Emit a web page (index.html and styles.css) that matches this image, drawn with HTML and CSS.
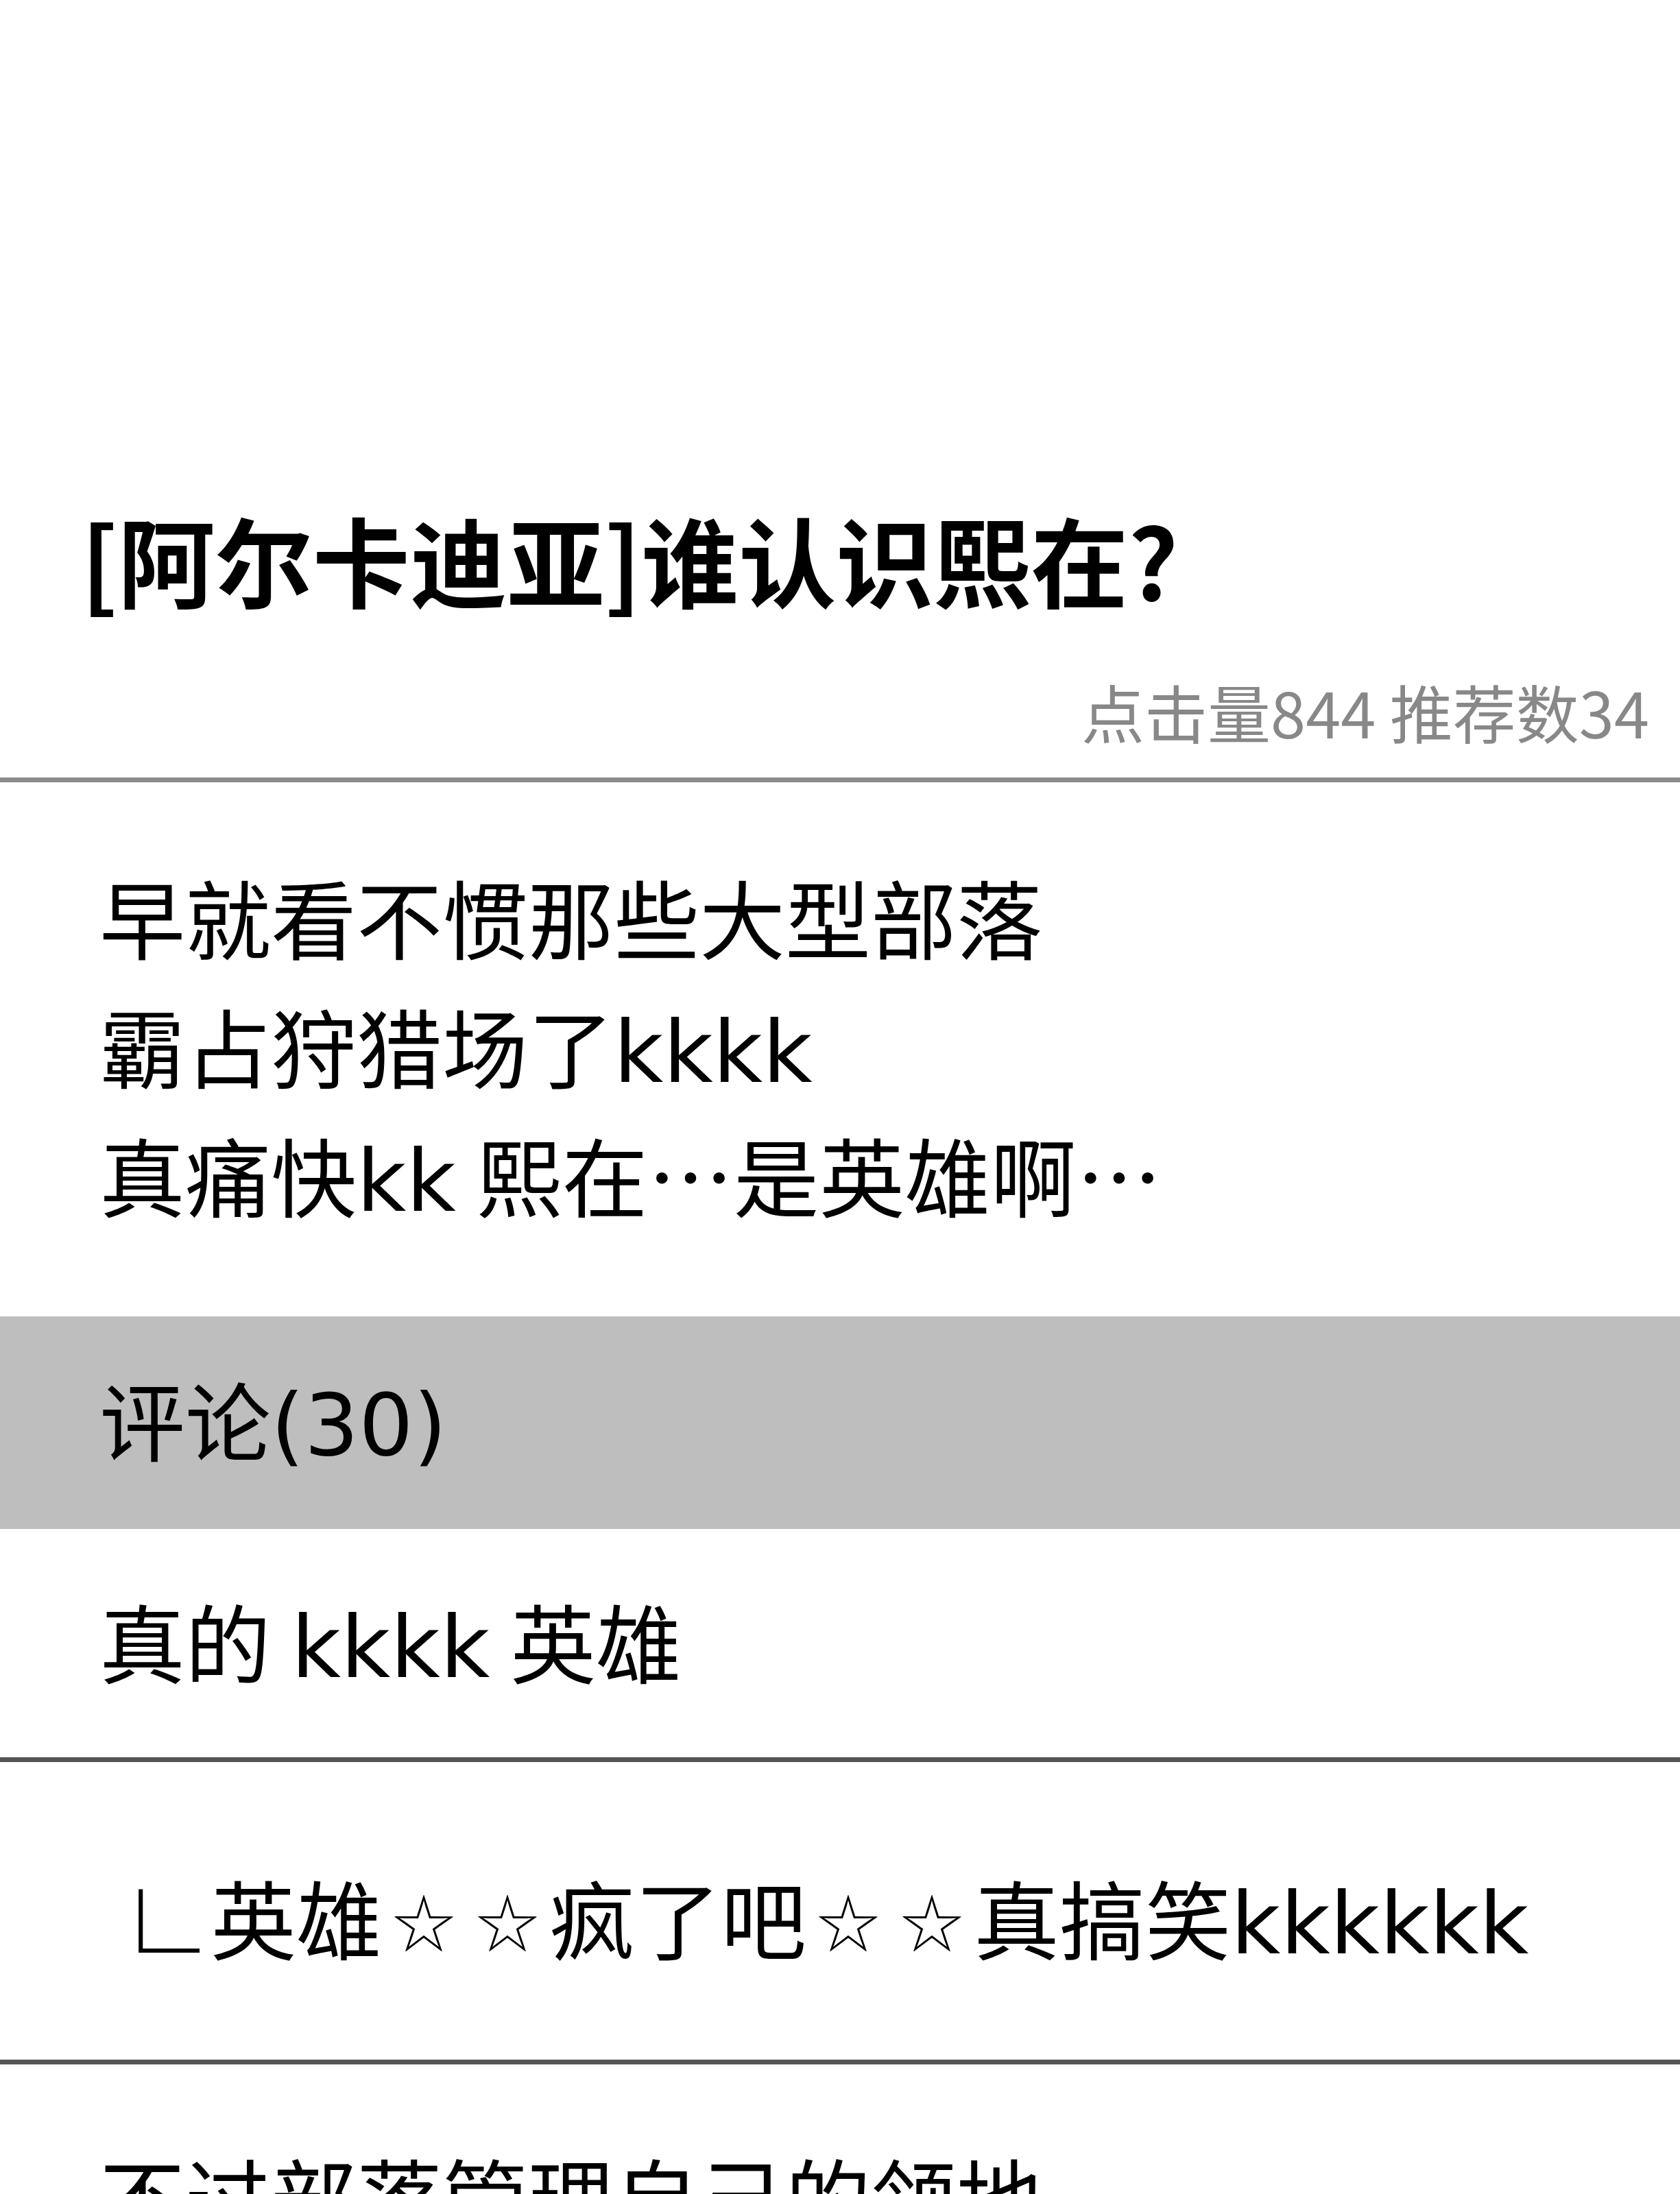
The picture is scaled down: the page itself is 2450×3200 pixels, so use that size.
FILE: index.html
```html
<!DOCTYPE html>
<html lang="zh-CN">
<head>
<meta charset="utf-8">
<title>[阿尔卡迪亚]谁认识熙在?</title>
<link rel="stylesheet" href="styles.css">
</head>
<body>
<main class="post">
  <header class="post-head">
    <h1 class="post-title">[阿尔卡迪亚]谁认识熙在?</h1>
    <p class="post-stats">点击量844 推荐数34</p>
  </header>

  <section class="post-body">
    <p class="line">早就看不惯那些大型部落</p>
    <p class="line">霸占狩猎场了<span class="lat">kkkk</span></p>
    <p class="line">真痛快<span class="lat">kk </span>熙在…是英雄啊…</p>
  </section>

  <h2 class="comments-bar">评论<span class="lat">(30)</span></h2>

  <ul class="comments">
    <li class="comment comment-first">真的<span class="lat"> kkkk </span>英雄</li>
    <li class="comment comment-reply"><span class="reply-mark">∟</span>英雄<span class="stars"><span class="star">☆</span><span class="star">☆</span></span>疯了吧<span class="stars"><span class="star">☆</span><span class="star">☆</span></span>真搞笑<span class="lat">kkkkkk</span></li>
    <li class="comment comment-last">不过部落管理自己的领地</li>
  </ul>
</main>
</body>
</html>
```

FILE: styles.css
```css
html, body {
  margin: 0;
  padding: 0;
  background: #ffffff;
}

body {
  width: 2450px;
  height: 3200px;
  overflow: hidden;
  font-family: "Noto Sans CJK SC", "Noto Sans", sans-serif;
  color: #000000;
}

.post {
  display: flex;
  flex-direction: column;
}

/* title + counters */
.post-head {
  display: flex;
  flex-direction: column;
  padding: 734px 45px 47px 118px;
  border-bottom: 7px solid #8a8a8a;
}

.post-title {
  margin: 0;
  font-size: 142px;
  line-height: 160px;
  font-weight: 700;
}

.post-stats {
  margin: 93px 0 0;
  align-self: flex-end;
  font-size: 92px;
  line-height: 100px;
  color: #888888;
}

/* article text */
.post-body {
  padding: 101px 0 114px 145px;
}

.line {
  margin: 0;
  font-size: 125px;
  line-height: 188px;
}

/* latin runs (kkkk, digits) are set a little wider than the CJK face's own;
   a small line-height keeps them from stretching the line box */
.lat {
  font-family: "DejaVu Sans", "Noto Sans CJK SC", sans-serif;
  font-weight: 400;
  line-height: 1;
  word-spacing: -10px;
}

/* grey "comments" strip */
.comments-bar {
  margin: 0;
  padding: 54px 0 68px 145px;
  background: #bebebe;
  font-size: 125px;
  line-height: 188px;
  font-weight: 400;
}

.comments {
  list-style: none;
  margin: 0;
  padding: 0;
}

.comment {
  padding-left: 145px;
  font-size: 125px;
  line-height: 188px;
  white-space: nowrap;
}

.comment-first {
  padding-top: 68px;
  padding-bottom: 77px;
  border-bottom: 7px solid #555555;
}

.comment-reply {
  padding-top: 131px;
  padding-bottom: 115px;
  padding-left: 182px;
  border-bottom: 7px solid #555555;
}

.comment-last {
  padding-top: 96px;
}

.reply-mark {
  font-weight: 300;
}

.star {
  display: inline-block;
  width: 122px;
  line-height: 1;
  text-align: center;
  font-size: 92px;
  font-weight: 300;
  vertical-align: 0.1em;
}
```
